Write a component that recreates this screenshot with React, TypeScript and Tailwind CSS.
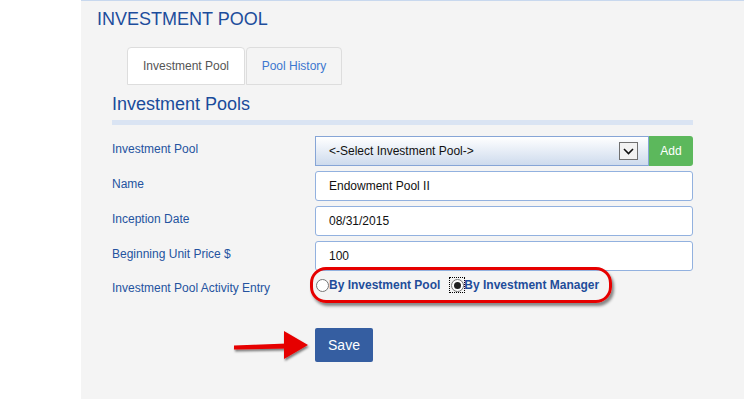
import React, { useState } from "react";

const rows = [
  { label: "Name", value: "Endowment Pool II" },
  { label: "Inception Date", value: "08/31/2015" },
  { label: "Beginning Unit Price $", value: "100" },
];

const Radio: React.FC<{ checked?: boolean; focused?: boolean }> = ({ checked, focused }) => (
  <span
    className={
      "flex items-center justify-center w-[14px] h-[14px] " +
      (focused ? "outline outline-1 outline-dotted outline-black" : "")
    }
  >
    <span className="flex items-center justify-center w-[13px] h-[13px] rounded-full border border-[#767676] bg-white">
      {checked && <span className="w-[7px] h-[7px] rounded-full bg-[#222]" />}
    </span>
  </span>
);

export default function App() {
  const [mode, setMode] = useState("manager");

  return (
    <div className="flex w-[744px] h-[399px] bg-white font-['Liberation_Sans',Arial,sans-serif] overflow-hidden">
      {/* left gutter */}
      <div className="w-[81px] shrink-0 bg-white" />

      {/* main panel */}
      <div className="flex-1 bg-[#f4f4f4] border-t border-[#c8d8ee] pl-[16px] pt-[8px]">
        <h1 className="text-[18px] leading-[21px] text-[#1d4d9c]">INVESTMENT POOL</h1>

        {/* tabs */}
        <div className="flex mt-[17px] ml-[30px]">
          <div className="w-[118px] h-[38px] flex items-center justify-center bg-white border border-[#dddddd] rounded-t-[4px] text-[12px] text-[#555]">
            Investment Pool
          </div>
          <div className="w-[96px] h-[38px] ml-[1px] flex items-center justify-center bg-[#f4f4f4] border border-[#dddddd] rounded-t-[4px] text-[12px] text-[#3d77cf]">
            Pool History
          </div>
        </div>

        <div className="ml-[15px] w-[581px]">
          <h2 className="mt-[9px] text-[18px] leading-[21px] text-[#1a4b9b]">Investment Pools</h2>
          <div className="mt-[5px] h-[5px] bg-[#dae4f3]" />

          {/* form */}
          <div className="mt-[11px] flex flex-col gap-[5px]">
            <div className="flex">
              <label className="w-[203px] pt-[6px] text-[12px] leading-[14px] text-[#24539f]">Investment Pool</label>
              <div className="flex flex-1 h-[30px]">
                <div className="flex flex-1 items-center justify-between pl-[13px] pr-[10px] border border-[#86a5d6] bg-gradient-to-b from-white to-[#cedbed] text-[12px] text-[#111]">
                  <span>&lt;-Select Investment Pool-&gt;</span>
                  <span className="flex items-center justify-center w-[19px] h-[18px] border border-[#707070] bg-[#f2f2f2]">
                    <svg width="11" height="7" viewBox="0 0 11 7">
                      <path d="M1 1l4.5 4.5L10 1" fill="none" stroke="#111" strokeWidth="1.6" />
                    </svg>
                  </span>
                </div>
                <button className="w-[44px] bg-[#5cb85c] rounded-r-[3px] text-[12px] text-white">Add</button>
              </div>
            </div>

            {rows.map((r) => (
              <div key={r.label} className="flex">
                <label className="w-[203px] pt-[6px] text-[12px] leading-[14px] text-[#24539f]">{r.label}</label>
                <div className="flex flex-1 items-center h-[30px] pl-[13px] bg-white border border-[#92b1df] rounded-[3px] text-[12px] text-[#111]">
                  {r.value}
                </div>
              </div>
            ))}

            <div className="flex">
              <label className="w-[203px] pt-[5px] text-[12px] leading-[14px] text-[#24539f]">
                Investment Pool Activity Entry
              </label>
              <div className="relative flex items-center h-[18px] text-[12px] font-bold text-[#1f4d9a]">
                <div className="absolute left-[-5px] top-[-9px] w-[302px] h-[36px] rounded-[16px] border-[3px] border-[#e60000] shadow-[2px_3px_3px_rgba(0,0,0,0.45)]" />
                <button className="flex items-center" onClick={() => setMode("pool")}>
                  <Radio checked={mode === "pool"} />
                  <span>By Investment Pool</span>
                </button>
                <button className="flex items-center ml-[10px]" onClick={() => setMode("manager")}>
                  <Radio checked={mode === "manager"} focused />
                  <span>By Investment Manager</span>
                </button>
              </div>
            </div>
          </div>

          {/* save */}
          <div className="relative flex mt-[33px] pl-[203px]">
            <svg className="absolute left-[118px] top-[1px]" width="84" height="34" viewBox="0 0 84 34">
              <defs>
                <filter id="sh" x="-20%" y="-30%" width="140%" height="170%">
                  <feDropShadow dx="1" dy="2" stdDeviation="1.3" floodColor="#000" floodOpacity="0.5" />
                </filter>
              </defs>
              <g filter="url(#sh)">
                <path d="M4 16.5 L57 14.5 L57 19.5 L4 20.5 Z" fill="#e60000" />
                <path d="M54 2 L78 16 L54 30 Z" fill="#e60000" />
              </g>
            </svg>
            <button className="w-[58px] h-[34px] bg-[#355ea1] rounded-[2px] text-[14px] text-white">Save</button>
          </div>
        </div>
      </div>
    </div>
  );
}
